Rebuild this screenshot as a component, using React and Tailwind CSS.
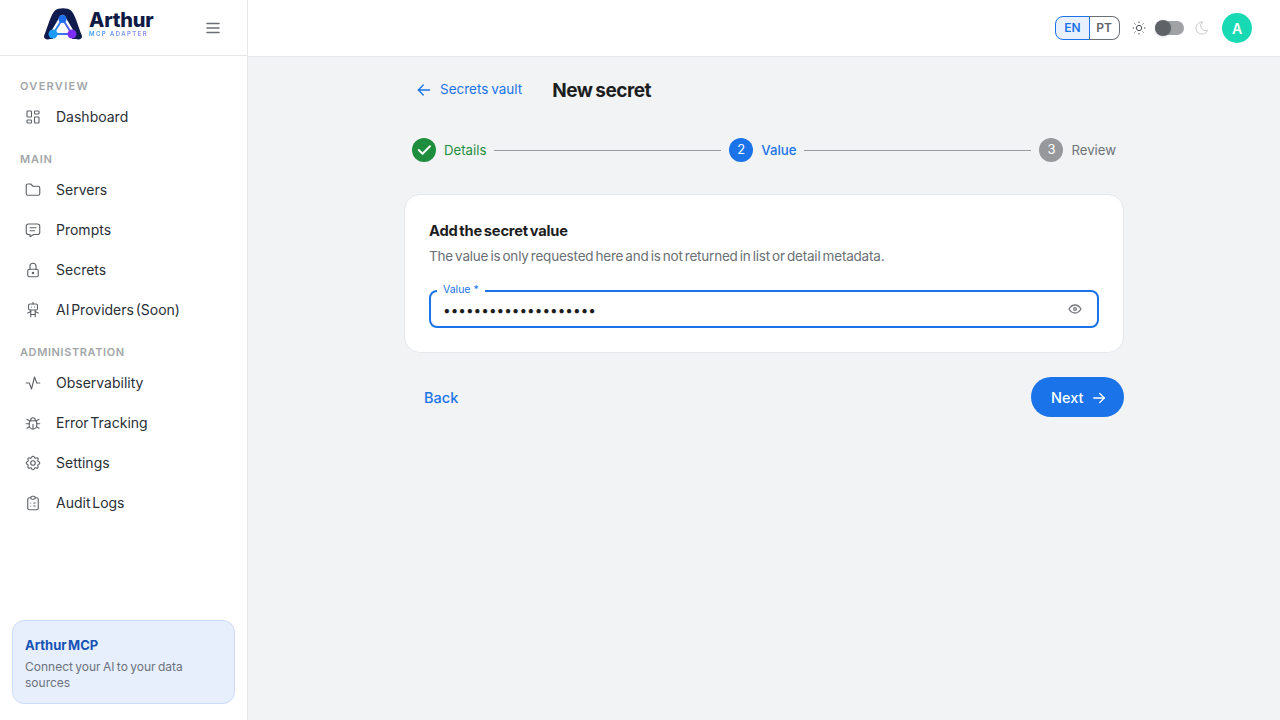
import React from 'react';
import {
  TbLayoutDashboard,
  TbFolder,
  TbMessage,
  TbLock,
  TbRobot,
  TbActivity,
  TbBug,
  TbSettings,
  TbClipboardList,
  TbMenu2,
  TbSun,
  TbMoon,
  TbArrowLeft,
  TbArrowRight,
  TbCheck,
  TbEye,
} from 'react-icons/tb';

const NAV = [
  { label: 'OVERVIEW', tracking: 'tracking-[1.3px]', items: [{ icon: TbLayoutDashboard, name: 'Dashboard' }] },
  {
    label: 'MAIN',
    tracking: 'tracking-[0.8px]',
    items: [
      { icon: TbFolder, name: 'Servers' },
      { icon: TbMessage, name: 'Prompts' },
      { icon: TbLock, name: 'Secrets' },
      { icon: TbRobot, name: 'AI Providers (Soon)' },
    ],
  },
  {
    label: 'ADMINISTRATION',
    tracking: 'tracking-[0.6px]',
    items: [
      { icon: TbActivity, name: 'Observability' },
      { icon: TbBug, name: 'Error Tracking' },
      { icon: TbSettings, name: 'Settings' },
      { icon: TbClipboardList, name: 'Audit Logs' },
    ],
  },
];

function Logo() {
  return (
    <div className="flex items-center pb-[8px]">
      <svg width="40" height="34" viewBox="0 0 40 34" fill="none">
        <defs>
          <linearGradient id="tri" x1="8" y1="28" x2="30" y2="28" gradientUnits="userSpaceOnUse">
            <stop offset="0" stopColor="#1a9bf5" />
            <stop offset="1" stopColor="#5a4df0" />
          </linearGradient>
        </defs>
        <path
          d="M1 29C5 19 8 7 12 3.500C15 0.500 25 0.500 28 3.500C32 7 35 19 39 29C39.500 32 36 33 33 32L7 32C4 33 0.500 32 1 29Z"
          fill="#0f1b4c"
        />
        <path d="M19.500 11L10 27L29 27Z" fill="#ffffff" stroke="#ffffff" strokeWidth="6" strokeLinejoin="round" />
        <rect x="10" y="27" width="19" height="6" fill="#ffffff" />
        <path d="M19.500 12L10 27L29 27Z" fill="#ffffff" stroke="url(#tri)" strokeWidth="2" strokeLinejoin="round" />
        <circle cx="19.500" cy="12" r="4" fill="#1d6ff0" />
        <circle cx="10" cy="27" r="4.500" fill="#1a9bf5" />
        <circle cx="29" cy="27" r="4.500" fill="#7c2cf5" />
      </svg>
      <div className="ml-[6px] flex flex-col">
        <span className="text-[20px] leading-[18px] font-extrabold tracking-[-0.2px] text-[#101a45]">
          Arthur
        </span>
        <span className="mt-[1px] bg-gradient-to-r from-[#2f9bf5] to-[#8f7cf5] bg-clip-text text-[6px] leading-[7px] font-semibold tracking-[1.4px] text-transparent">
          MCP ADAPTER
        </span>
      </div>
    </div>
  );
}

function Sidebar() {
  return (
    <aside className="flex h-full w-[248px] shrink-0 flex-col border-r border-[#e5e7eb] bg-white">
      <div className="flex h-[56px] shrink-0 items-center border-b border-[#e5e7eb] pr-[25px] pl-[43px]">
        <Logo />
        <TbMenu2 className="ml-auto text-[#6b7075]" size={18} />
      </div>
      <nav className="flex flex-1 flex-col gap-[12px] pt-[20px]">
        {NAV.map((section) => (
          <div key={section.label}>
            <div className={`mb-[1px] h-[20px] pl-[20px] text-[11px] leading-[20px] font-semibold text-[#a3a6aa] ${section.tracking}`}>
              {section.label}
            </div>
            {section.items.map((item) => (
              <div key={item.name} className="flex h-[40px] items-center gap-[14px] pl-[24px] text-[14px] text-[#2a2f36]">
                <item.icon size={18} strokeWidth={1.5} className="text-[#5f6368]" />
                <span className="pb-[2px] [word-spacing:-2.200px]">{item.name}</span>
              </div>
            ))}
          </div>
        ))}
      </nav>
      <div className="mx-[12px] mb-[16px] h-[84px] rounded-[12px] border border-[#cfdcf9] bg-[#e8effc] px-[12px] pt-[14px]">
        <div className="text-[13px] leading-[20px] font-bold text-[#1552b5] [word-spacing:-1.500px]">Arthur MCP</div>
        <div className="mt-[4px] text-[12px] leading-[16px] text-[#6b7280] [word-spacing:-1px]">Connect your AI to your data sources</div>
      </div>
    </aside>
  );
}

function Header() {
  return (
    <header className="flex h-[57px] shrink-0 items-center justify-end border-b border-[#e5e7eb] bg-white pr-[28px]">
      <div className="flex h-[24px] items-stretch text-[12px] font-semibold">
        <div className="flex w-[35px] items-center justify-center rounded-l-[8px] border border-[#1a73e8] bg-[#e8f0fd] text-[#1a73e8]">EN</div>
        <div className="-ml-px flex w-[31px] items-center justify-center rounded-r-[8px] border border-l-0 border-[#6b7075] text-[#5f6368]">PT</div>
      </div>
      <TbSun size={16} strokeWidth={1.5} className="ml-[11px] text-[#4b5057]" />
      <div className="relative ml-[8px] h-[14px] w-[29px] rounded-full bg-[#a0a2a5]">
        <div className="absolute top-[-1px] left-0 h-[16px] w-[16px] rounded-full bg-[#5f6368] shadow" />
      </div>
      <TbMoon size={16} strokeWidth={1.5} className="ml-[10px] text-[#c8cacc]" />
      <div className="ml-[12px] flex h-[30px] w-[30px] items-center justify-center rounded-full bg-[#17d9b3] text-[14px] font-semibold text-white">A</div>
    </header>
  );
}

function Step({ state, n, label }) {
  const colors = {
    done: ['bg-[#1e8e3e]', 'text-[#1e8e3e]'],
    active: ['bg-[#1a73e8]', 'text-[#1a73e8]'],
    todo: ['bg-[#96989b]', 'text-[#6f7378]'],
  }[state];
  return (
    <div className="flex items-center gap-[8px]">
      <div className={`flex h-[24px] w-[24px] items-center justify-center rounded-full text-[13px] text-white ${colors[0]}`}>
        {state === 'done' ? <TbCheck size={18} strokeWidth={2.500} /> : n}
      </div>
      <span className={`pt-[2px] text-[13.200px] ${state === 'active' ? 'font-medium' : ''} ${colors[1]}`}>{label}</span>
    </div>
  );
}

export default function App() {
  return (
    <div className="flex h-[720px] w-[1280px] overflow-hidden bg-[#f1f3f5] font-['Inter',sans-serif]">
      <Sidebar />
      <div className="flex min-w-0 flex-1 flex-col">
        <Header />
        <main className="mx-auto w-[720px] pt-[16px]">
          <div className="flex h-[34px] items-center pl-[10px]">
            <TbArrowLeft size={20} strokeWidth={1.75} className="scale-x-[0.95] text-[#1a73e8]" />
            <span className="ml-[6px] pb-[1px] text-[13.500px] text-[#1a73e8] [word-spacing:-1px]">Secrets vault</span>
            <h1 className="ml-[30px] pt-[2px] text-[19px] font-bold tracking-[-0.5px] text-[#1c1d20] [word-spacing:-1px]">New secret</h1>
          </div>
          <div className="mt-[31px] flex h-[24px] items-center px-[8px]">
            <Step state="done" label="Details" />
            <div className="mx-[8px] h-px flex-1 bg-[#9a9c9f]" />
            <Step state="active" n={2} label="Value" />
            <div className="mx-[8px] h-px flex-1 bg-[#9a9c9f]" />
            <Step state="todo" n={3} label="Review" />
          </div>
          <section className="mt-[32px] h-[159px] rounded-[16px] border border-[#e5e7eb] bg-white px-[24px] pt-[24px]">
            <h2 className="text-[14.700px] leading-[24px] font-bold tracking-[-0.2px] text-[#1c1d20] [word-spacing:-1.500px]">Add the secret value</h2>
            <p className="mt-[1px] text-[13.500px] leading-[24px] tracking-[-0.2px] text-[#6b7075] [word-spacing:-1.500px]">
              The value is only requested here and is not returned in list or detail metadata.
            </p>
            <div className="relative mt-[22px] flex h-[38px] items-center rounded-[8px] border-2 border-[#1a73e8] pr-[14px] pl-[12px]">
              <span className="absolute top-[-9px] left-[6px] bg-white px-[6px] text-[10.500px] leading-[14px] text-[#1a73e8]">Value *</span>
              <input
                type="password"
                readOnly
                value="abcdefghijklmnopqrst"
                className="min-w-0 flex-1 bg-transparent pt-[2px] text-[13.600px] text-[#1c1d20] outline-none"
              />
              <TbEye size={16} className="text-[#75787c]" />
            </div>
          </section>
          <div className="mt-[24px] flex items-center justify-between">
            <button className="h-[40px] px-[20px] pt-[1px] text-[14.500px] font-medium text-[#1a73e8]">Back</button>
            <button className="flex h-[40px] w-[93px] items-center gap-[7px] rounded-full bg-[#1a73e8] pt-[1px] pl-[20px] text-[14.500px] font-medium text-white">
              Next
              <TbArrowRight size={18} strokeWidth={1.75} />
            </button>
          </div>
        </main>
      </div>
    </div>
  );
}
